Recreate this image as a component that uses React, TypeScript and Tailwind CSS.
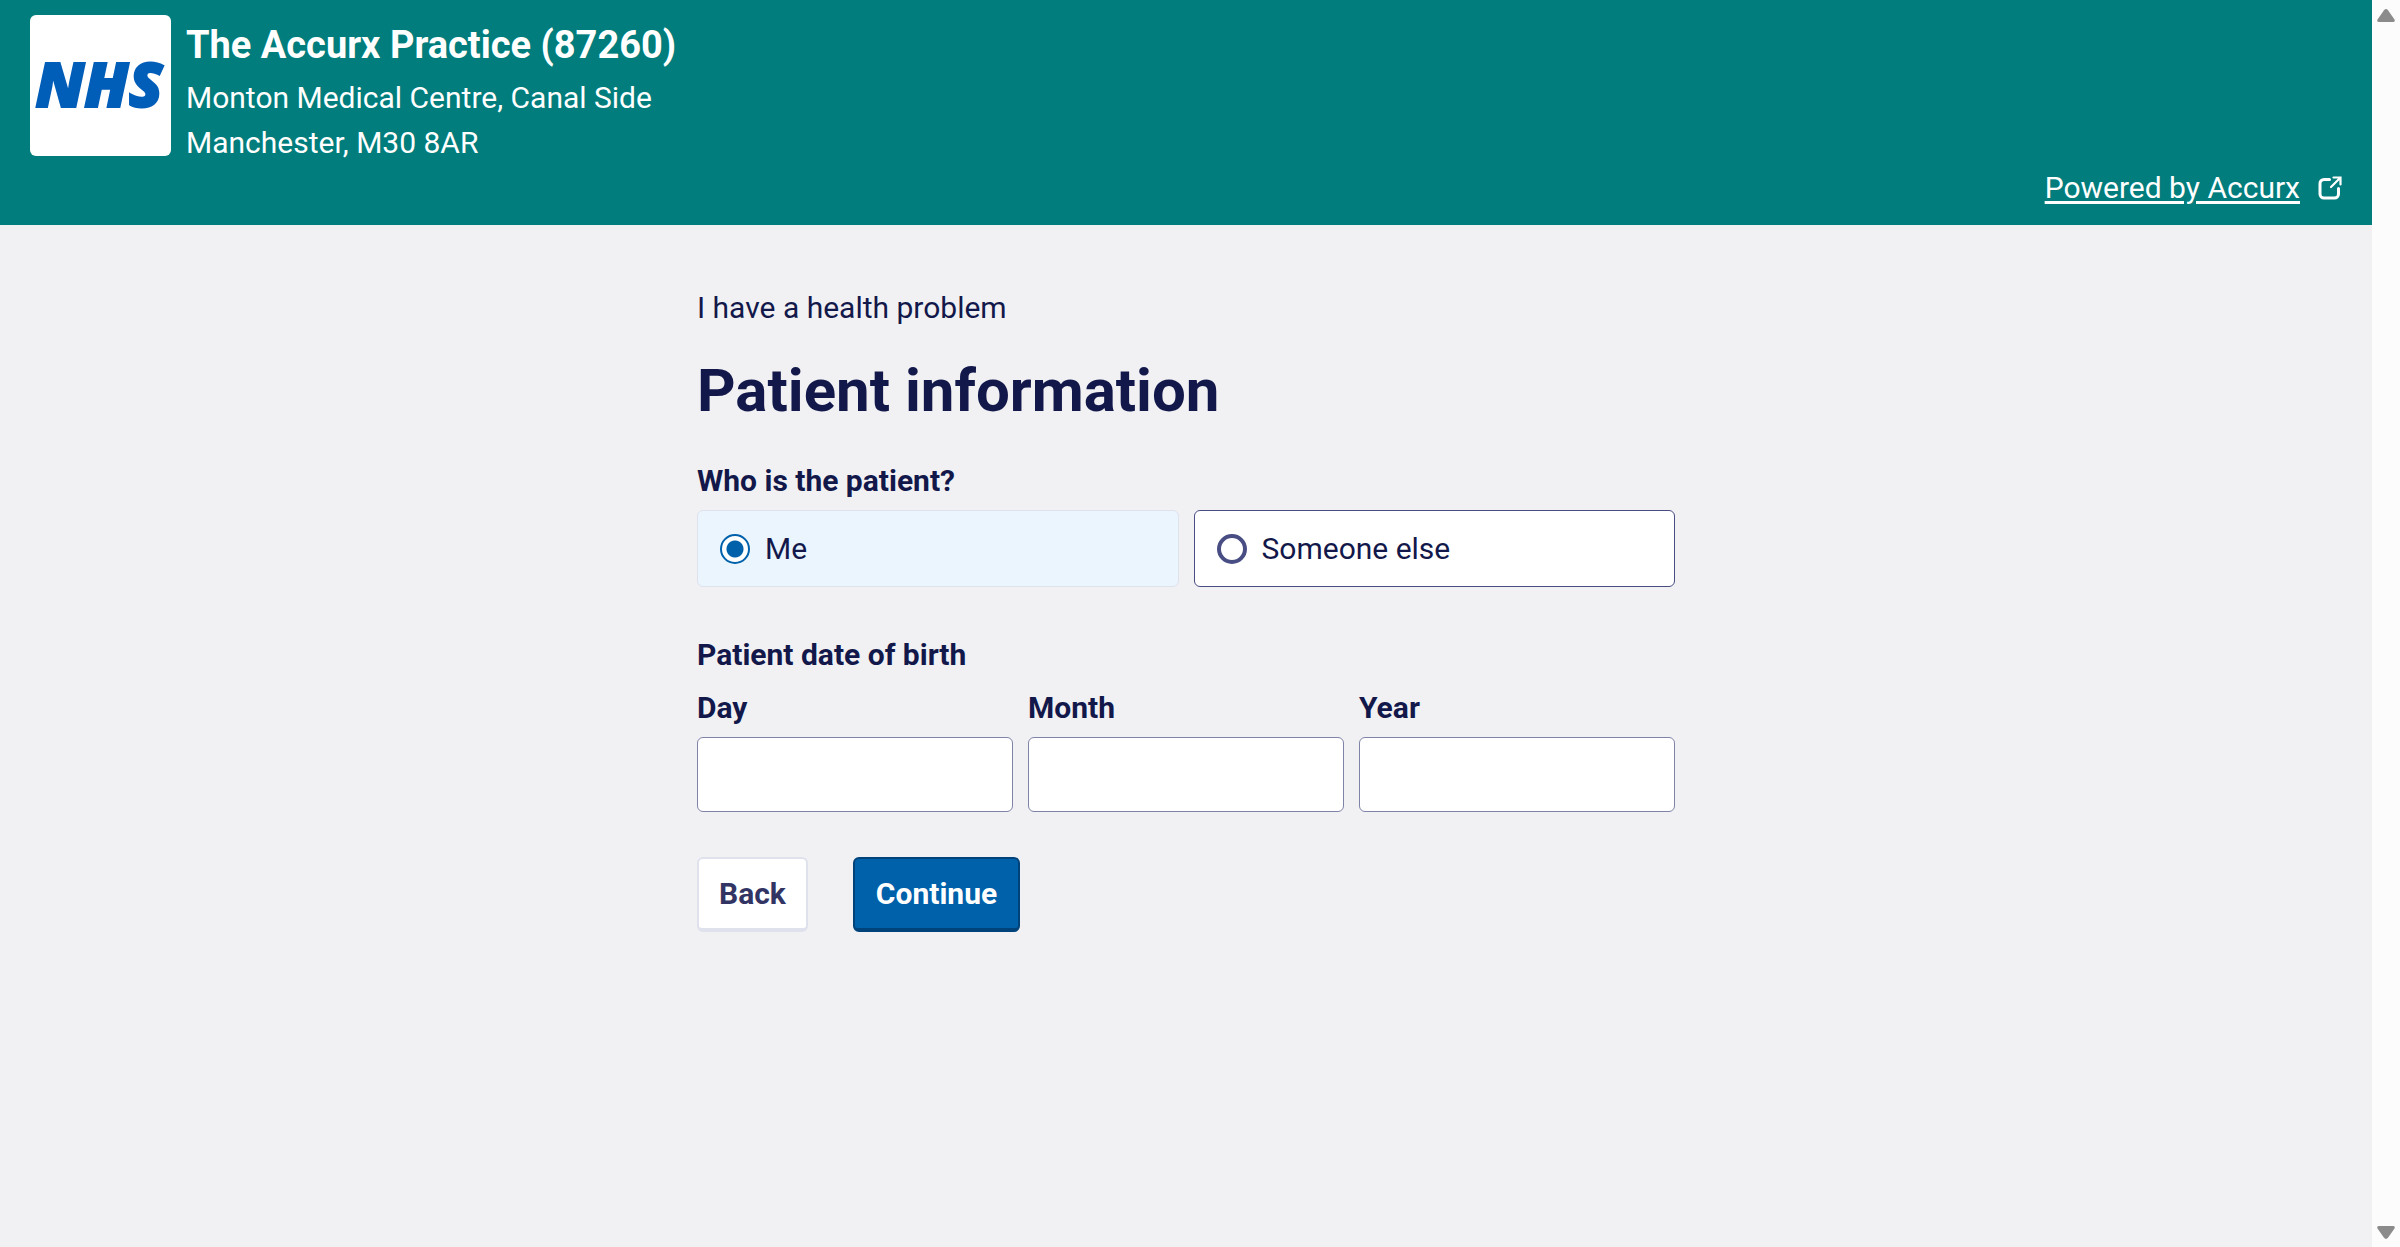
import { useState } from "react";

const dateFields = ["Day", "Month", "Year"];
const patients = ["Me", "Someone else"];

function ExternalIcon() {
  return (
    <svg viewBox="0 0 24 24" className="size-6 shrink-0" fill="none" stroke="currentColor" aria-hidden="true">
      <path d="M11.500 3.500H6A4 4 0 0 0 2 7.500V18a4 4 0 0 0 4 4H16.500a4 4 0 0 0 4-4V12.500" strokeWidth="3" strokeLinecap="round" />
      <path d="M13 11 22 2M15.500 1.500h7v7" strokeWidth="2.2" strokeLinecap="round" />
    </svg>
  );
}

function Header() {
  return (
    <header className="flex flex-col bg-[#007d7c] px-[30px] py-[15px] text-white">
      <div className="flex gap-[15px]">
        <div className="flex size-[141px] shrink-0 items-center justify-center rounded-md bg-white">
          <svg viewBox="0 0 141 141" className="size-full" role="img" aria-label="NHS">
            <text
              x="69"
              y="92"
              textAnchor="middle"
              strokeWidth="2"
              className="fill-[#005eb8] stroke-[#005eb8] font-['Open_Sans'] text-[62px] font-extrabold italic"
            >
              NHS
            </text>
          </svg>
        </div>
        <div className="leading-[45px]">
          <h2 className="text-[38px] leading-[60px] font-bold">The Accurx Practice (87260)</h2>
          <p>Monton Medical Centre, Canal Side</p>
          <p>Manchester, M30 8AR</p>
        </div>
      </div>
      <a href="#accurx" className="flex items-center gap-[18px] self-end leading-[45px]">
        <span className="underline decoration-[3px] underline-offset-[3px]">Powered by Accurx</span>
        <ExternalIcon />
      </a>
    </header>
  );
}

function PatientForm() {
  const [patient, setPatient] = useState("Me");
  return (
    <main className="mx-auto w-full max-w-[978px] pt-[60px] leading-[45px]">
      <p>I have a health problem</p>
      <h1 className="mt-[23px] text-[60px] leading-[75px] font-bold">Patient information</h1>
      <form onSubmit={(e) => e.preventDefault()}>
        <fieldset className="mt-[30px]">
          <legend className="font-bold">Who is the patient?</legend>
          <div className="mt-[7px] grid grid-cols-2 gap-[15px]">
            {patients.map((name) => (
              <label
                key={name}
                className="flex h-[77px] items-center gap-[15px] rounded-md border border-[#484d83] bg-white px-[22px] has-checked:border-[#dfe2ee] has-checked:bg-[#eaf5fe]"
              >
                <input
                  type="radio"
                  name="patient"
                  checked={patient === name}
                  onChange={() => setPatient(name)}
                  className="size-[30px] appearance-none rounded-full border-4 border-[#484d83] bg-white checked:border-2 checked:border-[#0061ab] checked:bg-[radial-gradient(circle,#0061ab_8px,white_9px)]"
                />
                <span>{name}</span>
              </label>
            ))}
          </div>
        </fieldset>
        <fieldset className="mt-[45px]">
          <legend className="font-bold">Patient date of birth</legend>
          <div className="mt-2 grid grid-cols-3 gap-[15px]">
            {dateFields.map((name) => (
              <label key={name} className="flex flex-col gap-[7px] font-bold">
                {name}
                <input
                  type="text"
                  inputMode="numeric"
                  className="h-[75px] w-full rounded-md border border-[#8083a8] bg-white px-[15px] font-normal"
                />
              </label>
            ))}
          </div>
        </fieldset>
        <div className="mt-[45px] flex gap-[45px]">
          <button type="button" className="h-[75px] rounded-md border-2 border-b-4 border-[#dfe1ed] bg-white px-5 font-bold text-[#323464]">
            Back
          </button>
          <button type="submit" className="h-[75px] rounded-md border-2 border-b-4 border-[#00437a] bg-[#0061ab] px-[21px] font-bold text-white">
            Continue
          </button>
        </div>
      </form>
    </main>
  );
}

function ScrollRail() {
  return (
    <div className="flex w-7 shrink-0 flex-col items-center justify-between bg-[#fcfcfc] pt-[9px] pb-2 text-[#8b8b8b]" aria-hidden="true">
      <svg viewBox="0 0 18 13" className="h-[13px] w-[18px]" fill="currentColor">
        <path d="M7 1.200Q9-1 11 1.200L17.500 10.500Q18.500 13 16 13H2Q-.5 13 .5 10.500Z" />
      </svg>
      <svg viewBox="0 0 18 13" className="h-[13px] w-[18px]" fill="currentColor">
        <path d="M7 11.800Q9 14 11 11.800L17.500 2.500Q18.500 0 16 0H2Q-.5 0 .5 2.500Z" />
      </svg>
    </div>
  );
}

export default function App() {
  return (
    <div className="flex min-h-screen bg-[#f1f1f4] font-[Roboto,sans-serif] text-[30px] text-[#13184a]">
      <div className="min-w-0 flex-1">
        <Header />
        <PatientForm />
      </div>
      <ScrollRail />
    </div>
  );
}
